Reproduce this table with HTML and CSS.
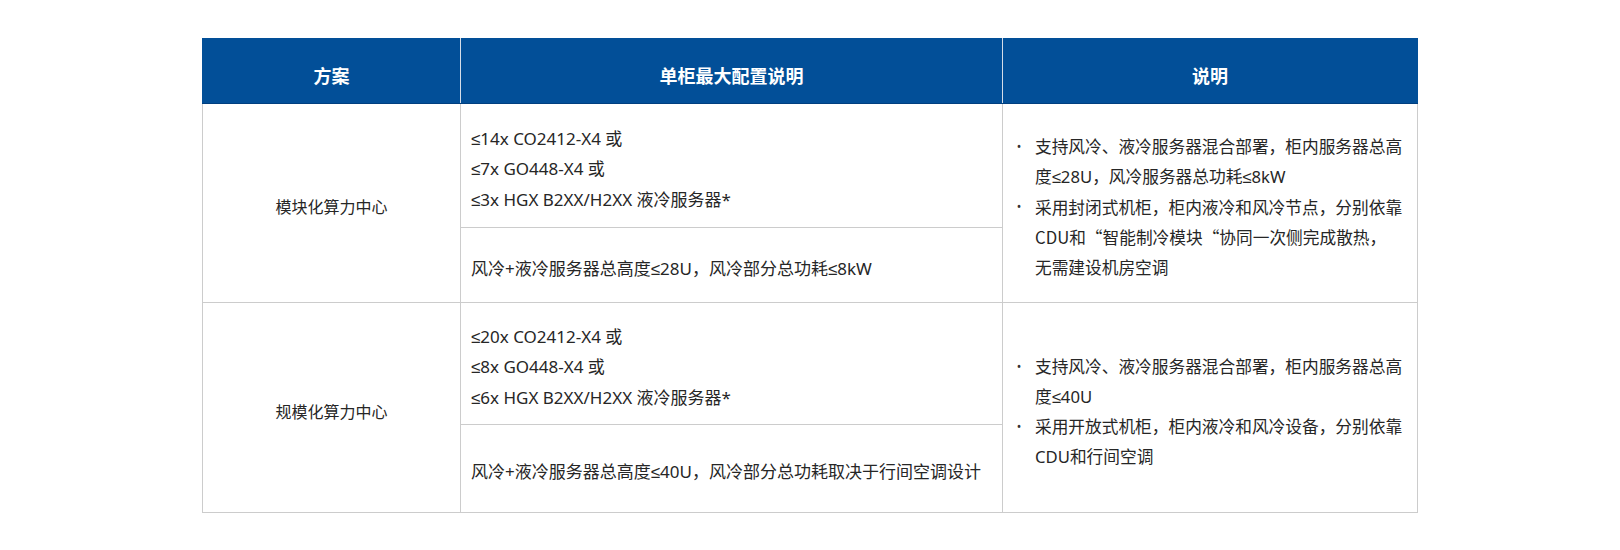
FILE: index.html
```html
<!DOCTYPE html>
<html lang="zh-CN">
<head>
<meta charset="utf-8">
<title>方案对比</title>
<link rel="stylesheet" href="styles.css">
</head>
<body>
<table class="spec">
  <colgroup>
    <col class="c1">
    <col class="c2">
    <col class="c3">
  </colgroup>
  <thead>
    <tr class="head">
      <th>方案</th>
      <th>单柜最大配置说明</th>
      <th>说明</th>
    </tr>
  </thead>
  <tbody>
    <tr class="r1a">
      <td class="name" rowspan="2">模块化算力中心</td>
      <td class="cfg">≤14x CO2412-X4 或<br>≤7x GO448-X4 或<br>≤3x HGX B2XX/H2XX 液冷服务器*</td>
      <td class="desc" rowspan="2">
        <ul>
          <li><span class="t">支持风冷、液冷服务器混合部署，柜内服务器总高度≤28U，风冷服务器总功耗≤8kW</span></li>
          <li class="cjk"><span class="t">采用封闭式机柜，柜内液冷和风冷节点，分别依靠CDU和“智能制冷模块“协同一次侧完成散热，<br>无需建设机房空调</span></li>
        </ul>
      </td>
    </tr>
    <tr class="r1b">
      <td class="cfg">风冷+液冷服务器总高度≤28U，风冷部分总功耗≤8kW</td>
    </tr>
    <tr class="r2a">
      <td class="name" rowspan="2">规模化算力中心</td>
      <td class="cfg">≤20x CO2412-X4 或<br>≤8x GO448-X4 或<br>≤6x HGX B2XX/H2XX 液冷服务器*</td>
      <td class="desc" rowspan="2">
        <ul>
          <li><span class="t">支持风冷、液冷服务器混合部署，柜内服务器总高度≤40U</span></li>
          <li><span class="t">采用开放式机柜，柜内液冷和风冷设备，分别依靠CDU和行间空调</span></li>
        </ul>
      </td>
    </tr>
    <tr class="r2b">
      <td class="cfg">风冷+液冷服务器总高度≤40U，风冷部分总功耗取决于行间空调设计</td>
    </tr>
  </tbody>
</table>
</body>
</html>
```

FILE: styles.css
```css
html, body {
  margin: 0;
  padding: 0;
  background: #ffffff;
}

body {
  font-family: "Noto Sans", "Liberation Sans", "Noto Sans CJK SC", sans-serif;
  color: #262626;
  font-size: 16px;
}

.spec {
  width: 1215px;
  margin: 38px auto 0;
  border-collapse: collapse;
  table-layout: fixed;
}

.c1 { width: 258px; }
.c2 { width: 542px; }
.c3 { width: 415px; }

.head th {
  background: #024f98;
  color: #ffffff;
  font-size: 18px;
  font-weight: 700;
  height: 57px;
  padding: 8px 0 0;
  border-left: 1px solid #d6dde8;
  border-bottom: 1px solid #003f7f;
  text-align: center;
  vertical-align: middle;
}

.head th:first-child {
  border-left: 1px solid #024f98;
}

.head th:last-child {
  border-right: 1px solid #024f98;
}

td {
  border: 1px solid #cccccc;
  vertical-align: middle;
  line-height: 30px;
  padding: 8px 0 0;
}

.name {
  text-align: center;
}

.cfg {
  padding-left: 10px;
  font-size: 17px;
  line-height: 30.5px;
}

.r1a { height: 124px; }
.r1b { height: 75px; }
.r2a { height: 122px; }
.r2b { height: 88px; }

.desc {
  padding-right: 8px;
  font-size: 16.7px;
}

.desc ul {
  list-style: none;
  margin: 0;
  padding: 0;
}

.desc li {
  display: grid;
  grid-template-columns: 32px 1fr;
  line-height: 30px;
}

.desc li::before {
  content: "•";
  font-family: "Noto Sans", sans-serif;
  font-size: 12px;
  text-align: center;
  color: #333333;
}

.desc li.cjk {
  font-family: "Noto Sans CJK SC", sans-serif;
}
```
